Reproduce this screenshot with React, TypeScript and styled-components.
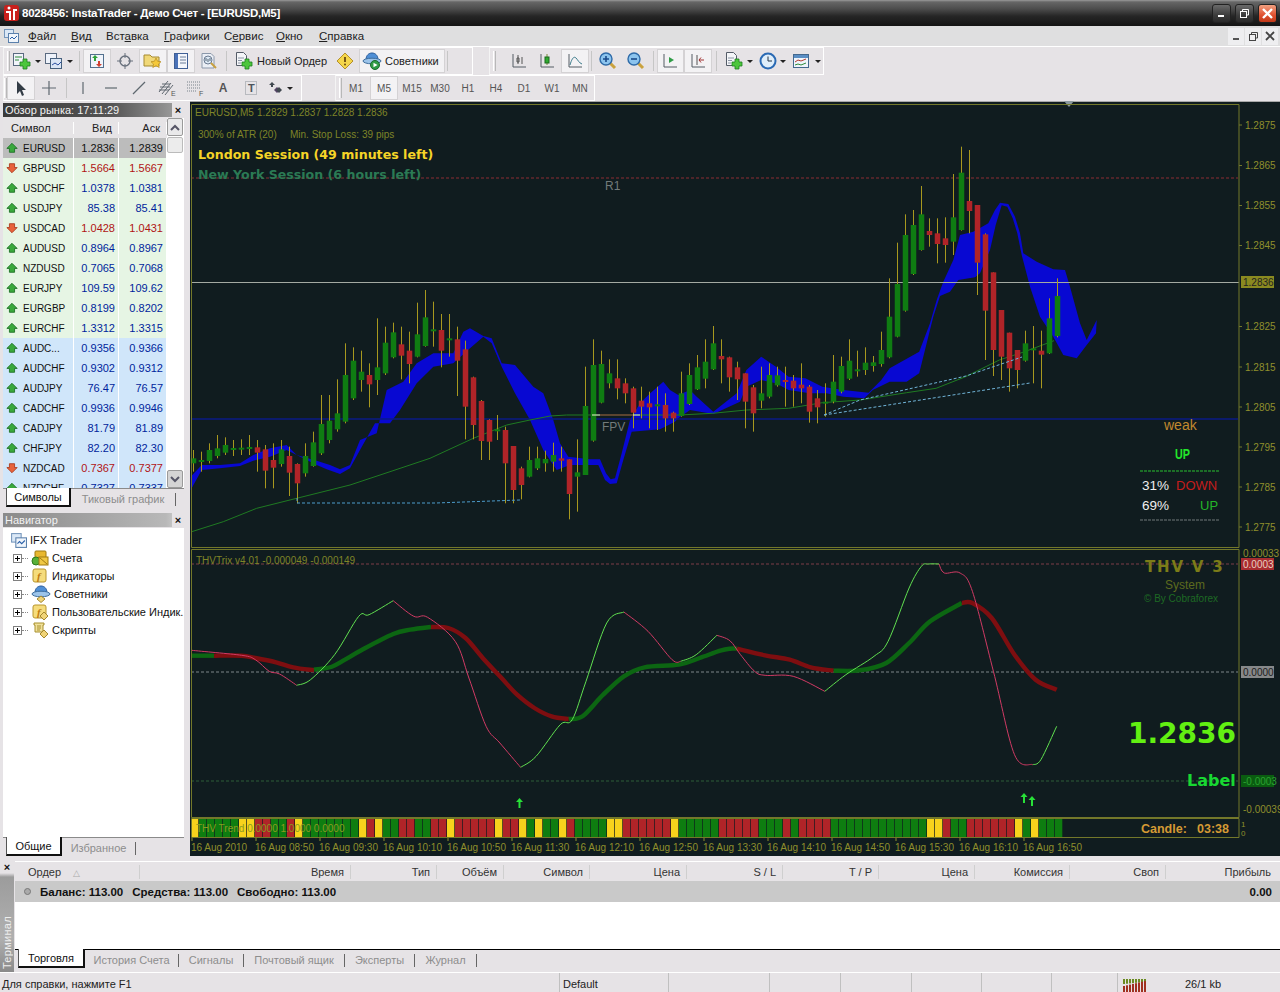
import React from 'react'
import styled, { createGlobalStyle } from 'styled-components'

const GlobalStyle = createGlobalStyle`
  html, body { margin: 0; padding: 0; background: #e6e3e6; }
  body { font-family: "Liberation Sans", Arial, sans-serif; font-size: 11px; color: #111; }
  * { box-sizing: border-box; }
`

const Page = styled.div`
  width: 1280px;
  height: 992px;
  overflow: hidden;
  display: flex;
  flex-direction: column;
  background: #e6e3e6;
`

/* ---------- title + menu ---------- */
const TitleBar = styled.div`
  height: 26px;
  display: flex;
  align-items: center;
  padding: 0 3px 0 3px;
  background: linear-gradient(#9a9a9a 0, #666 2px, #4c4c4c 9px, #262626 16px, #141414 26px);
  color: #fff;
  font-weight: bold;
  font-size: 11.5px;
`
const TitleText = styled.span`
  margin-left: 2px;
  letter-spacing: -0.25px;
`
const TitleButtons = styled.div`
  margin-left: auto;
  display: flex;
  gap: 4px;
`
const WinButton = styled.div<{ $close?: boolean }>`
  width: 19px;
  height: 19px;
  border-radius: 3px;
  display: flex;
  align-items: center;
  justify-content: center;
  border: 1px solid #222;
  background: ${p => p.$close ? 'linear-gradient(#f0a080, #e05030 60%, #c03818)' : 'linear-gradient(#6a6a6a, #3c3c3c 60%, #2a2a2a)'};
`
const MenuBar = styled.div`
  height: 21px;
  display: flex;
  align-items: center;
  background: #dfdfe0;
  border-bottom: 1px solid #fff;
  padding-left: 3px;
`
const MenuIcon = styled.span`
  width: 25px;
  display: flex;
`
const MenuItem = styled.span<{ $w: number }>`
  width: ${p => p.$w}px;
  font-size: 11.5px;
  color: #222;
  u { text-decoration: underline; }
`
const MdiButtons = styled.div`
  margin-left: auto;
  display: flex;
  gap: 1px;
  padding-right: 2px;
`
const MdiButton = styled.div`
  width: 16px;
  height: 17px;
  background: #eeeef0;
  display: flex;
  align-items: center;
  justify-content: center;
`

/* ---------- toolbars ---------- */
const ToolRow = styled.div<{ $h: number }>`
  height: ${p => p.$h}px;
  display: flex;
  padding-left: 3px;
`
const ToolGroup = styled.div<{ $w: number; $ml?: number; $pl?: number }>`
  width: ${p => p.$w}px;
  margin-left: ${p => p.$ml ?? 0}px;
  height: 100%;
  display: flex;
  align-items: center;
  padding-left: ${p => p.$pl ?? 3}px;
  border-top: 1px solid #fff;
  border-bottom: 1px solid #fff;
  border-right: 1px solid #fff;
  border-left: 1px solid #f4f4f4;
`
const Handle = styled.div`
  width: 3px;
  height: 20px;
  border-left: 1px solid #fff;
  border-right: 1px solid #b8b8b8;
`
const Spacer = styled.span<{ $w: number }>`
  width: ${p => p.$w}px;
  flex: none;
`
const ToolButton = styled.div<{ $w?: number; $on?: boolean; $pad?: number }>`
  width: ${p => p.$w ?? 28}px;
  height: 24px;
  display: flex;
  align-items: center;
  justify-content: ${p => p.$pad !== undefined ? 'flex-start' : 'center'};
  gap: 3px;
  padding-left: ${p => p.$pad ?? 0}px;
  font-size: 11px;
  color: #222;
  background: ${p => p.$on ? '#f3f2f4' : 'transparent'};
  box-shadow: ${p => p.$on ? 'inset 0 0 0 1px #d4d2d4' : 'none'};
`
const TfButton = styled(ToolButton)`
  font-size: 10px;
  color: #555;
`
const ToolSep = styled.div<{ $w: number }>`
  width: ${p => p.$w}px;
  height: 20px;
  display: flex;
  justify-content: center;
  &::after { content: ""; width: 1px; background: #c6c6c6; }
`
const Caret = styled.span`
  width: 0;
  height: 0;
  border-left: 3px solid transparent;
  border-right: 3px solid transparent;
  border-top: 3px solid #222;
`
const ToolLetter = styled.span`
  font: bold 12px "Liberation Sans", Arial, sans-serif;
  color: #555;
`

/* ---------- left column ---------- */
const Main = styled.div`
  height: 755px;
  display: flex;
`
const LeftColumn = styled.div`
  width: 190px;
  flex: none;
  display: flex;
  flex-direction: column;
  padding: 2px 6px 0 3px;
`
const DockHead = styled.div<{ $light?: boolean }>`
  height: 14px;
  flex: none;
  display: flex;
  align-items: center;
  justify-content: space-between;
  color: #f2f2f2;
  font-size: 11px;
  padding-left: 2px;
  background: ${p => p.$light
    ? 'linear-gradient(90deg, #8a8a8a, #b8b8b8 90%, #d8d8d8)'
    : 'linear-gradient(90deg, #3a3a3a, #555 60%, #8c8c8c 88%, #a6a6a6)'};
`
const DockTitle = styled.span`
  flex: 1;
  line-height: 13px;
`
const DockClose = styled.span`
  color: #111;
  font-weight: bold;
  font-size: 11px;
  background: #e6e3e6;
  width: 12px;
  text-align: center;
  line-height: 14px;
`
const WatchBody = styled.div`
  height: 370px;
  margin-top: 1px;
  display: flex;
  background: #fff;
  overflow: hidden;
`
const WatchTable = styled.div`
  width: 164px;
  flex: none;
`
const WatchHeader = styled.div`
  height: 20px;
  display: grid;
  grid-template-columns: 71px 45px 48px;
  align-items: center;
  background: #e6e4e6;
  font-size: 11px;
  color: #222;
`
const WatchCell = styled.div<{ $right?: boolean }>`
  padding: ${p => p.$right ? '0 6px 0 0' : '0 0 0 8px'};
  text-align: ${p => p.$right ? 'right' : 'left'};
  border-right: 1px solid #fff;
`
const WatchRow = styled.div<{ $bg: string }>`
  height: 20px;
  display: grid;
  grid-template-columns: 71px 45px 48px;
  align-items: center;
  background: ${p => p.$bg};
`
const SymbolCell = styled.div`
  display: flex;
  align-items: center;
  gap: 5px;
  padding-left: 3px;
  font-size: 10px;
  height: 100%;
  color: #111;
  border-right: 1px solid #fff;
`
const PriceCell = styled.div<{ $c: string }>`
  height: 100%;
  line-height: 20px;
  text-align: right;
  padding-right: 3px;
  font-size: 11px;
  color: ${p => p.$c};
  border-right: 1px solid #fff;
`
const ScrollTrack = styled.div`
  width: 16px;
  display: flex;
  flex-direction: column;
  background: #fff;
`
const ScrollButton = styled.div<{ $dim?: boolean }>`
  height: 18px;
  flex: none;
  display: flex;
  align-items: center;
  justify-content: center;
  background: ${p => p.$dim ? '#d4d4d4' : '#e9e9ea'};
  border: 1px solid #9a9a9a;
  border-radius: 2px;
`
const ScrollThumb = styled.div`
  height: 16px;
  margin-top: 1px;
  flex: none;
  background: #ececec;
  border: 1px solid #bbb;
  border-radius: 2px;
`
const ScrollGap = styled.div`
  flex: 1;
`
const DockTabs = styled.div`
  height: 19px;
  flex: none;
  display: flex;
  align-items: flex-start;
  border-top: 1px solid #8a8a8a;
  font-size: 11px;
  color: #8d8d8d;
  padding-left: 3px;
`
const ActiveTab = styled.div<{ $w: number }>`
  width: ${p => p.$w}px;
  height: 19px;
  margin-top: -1px;
  background: #fff;
  color: #111;
  text-align: center;
  line-height: 18px;
  border-left: 1px solid #555;
  border-right: 2px solid #111;
  border-bottom: 2px solid #111;
`
const IdleTab = styled.div<{ $w: number }>`
  width: ${p => p.$w}px;
  text-align: center;
  border-right: 1px solid #666;
  height: 13px;
  margin-top: 4px;
  line-height: 12px;
`
const NavigatorDock = styled.div`
  margin-top: 6px;
  flex: 1;
  display: flex;
  flex-direction: column;
`
const NavBody = styled.div`
  flex: 1;
  margin-top: 1px;
  background: #fff;
  padding-top: 3px;
  overflow: hidden;
`
const TreeRoot = styled.div`
  height: 18px;
  display: flex;
  align-items: center;
  gap: 3px;
  padding-left: 7px;
  font-size: 11px;
`
const TreeItem = styled.div`
  height: 18px;
  display: flex;
  align-items: center;
  font-size: 11px;
  padding-left: 10px;
  white-space: nowrap;
  gap: 3px;
  color: #111;
`
const Expander = styled.div`
  width: 9px;
  height: 9px;
  flex: none;
  border: 1px solid #808080;
  background: #fff;
  position: relative;
  margin-right: 1px;
  &::before {
    content: "";
    position: absolute;
    left: 1px; right: 1px; top: 3px;
    height: 1px;
    background: #000;
  }
  &::after {
    content: "";
    position: absolute;
    top: 1px; bottom: 1px; left: 3px;
    width: 1px;
    background: #000;
  }
`
const TreeDots = styled.div`
  width: 6px;
  margin-left: -4px;
  border-top: 1px dotted #888;
`

/* ---------- chart ---------- */
const ChartColumn = styled.div`
  flex: 1;
  display: flex;
  flex-direction: column;
  background: #101c1f;
  box-shadow: inset 0 1px 0 #a8a8a8;
`
const PaneSvg = styled.svg<{ $h: number }>`
  display: block;
  width: 1090px;
  height: ${p => p.$h}px;
  flex: none;
`
const AxisText = styled.text`
  font: 10px "Liberation Sans", Arial, sans-serif;
  fill: #8f8f2c;
`
const SmallAxisText = styled(AxisText)`
  font-size: 8px;
`
const LegendText = styled.text`
  font: 10px "Liberation Sans", Arial, sans-serif;
  fill: #7f8428;
`
const SessionText = styled.text<{ $c: string }>`
  font: bold 12.6px "DejaVu Sans", Verdana, sans-serif;
  fill: ${p => p.$c};
`
const PivotText = styled.text`
  font: 12px "Liberation Sans", Arial, sans-serif;
  fill: #737b7b;
`
const StatText = styled.text<{ $c: string; $s?: number; $b?: boolean }>`
  font-family: "Liberation Sans", Arial, sans-serif;
  font-size: ${p => p.$s ?? 13}px;
  font-weight: ${p => p.$b ? 'bold' : 'normal'};
  fill: ${p => p.$c};
`
const BigText = styled.text<{ $c: string; $s: number; $track?: number }>`
  font-family: "DejaVu Sans", Verdana, sans-serif;
  font-weight: bold;
  font-size: ${p => p.$s}px;
  letter-spacing: ${p => p.$track ?? 0}px;
  fill: ${p => p.$c};
`

/* ---------- terminal ---------- */
const Terminal = styled.div`
  height: 116px;
  flex: none;
  display: flex;
  padding-top: 1px;
`
const TerminalStrip = styled.div`
  width: 14px;
  flex: none;
  display: flex;
  flex-direction: column;
  align-items: center;
  padding-top: 5px;
  background: linear-gradient(#e6e3e6 16px, #9c9c9c 20px, #b0b0b0 70%, #8a8a8a);
`
const StripClose = styled.span`
  font-weight: bold;
  font-size: 11px;
  color: #111;
  line-height: 11px;
`
const StripLabel = styled.span`
  margin-top: auto;
  margin-bottom: 3px;
  writing-mode: vertical-rl;
  transform: rotate(180deg);
  color: #eee;
  font-size: 11px;
  letter-spacing: 0.3px;
`
const TerminalBody = styled.div`
  flex: 1;
  display: flex;
  flex-direction: column;
  padding-top: 4px;
  margin-left: 1px;
`
const OrderHeader = styled.div`
  height: 20px;
  flex: none;
  display: grid;
  grid-template-columns: 125px 211px 86px 67px 86px 97px 96px 96px 96px 95px 96px 114px;
  align-items: center;
  font-size: 11px;
  color: #333;
  border-top: 1px solid #fff;
`
const OrderCol = styled.div<{ $left?: boolean; $last?: boolean }>`
  height: 14px;
  line-height: 14px;
  text-align: ${p => p.$left ? 'left' : 'right'};
  padding: ${p => p.$left ? '0 0 0 13px' : p.$last ? '0 9px 0 0' : '0 6px 0 0'};
  border-right: ${p => p.$last ? 'none' : '1px solid #cfcfcf'};
  span { color: #aaa; margin-left: 12px; font-size: 9px; }
`
const SummaryRow = styled.div`
  height: 21px;
  flex: none;
  background: #c9c9c9;
  display: flex;
  align-items: center;
  gap: 9px;
  padding: 0 8px 0 9px;
  font-weight: bold;
  font-size: 11.5px;
  color: #111;
`
const SummaryValue = styled.span`
  margin-left: auto;
`
const SummaryDot = styled.span`
  width: 7px;
  height: 7px;
  border-radius: 50%;
  background: #aaa;
  border: 1px solid #777;
`
const OrderBlank = styled.div`
  flex: 1;
  background: #fff;
`
const TermTabs = styled.div`
  height: 23px;
  flex: none;
  display: flex;
  align-items: flex-start;
  border-top: 1px solid #000;
  padding-left: 3px;
  font-size: 11px;
  color: #8d8d8d;
`
const StatusBar = styled.div`
  height: 20px;
  flex: none;
  display: grid;
  grid-template-columns: 560px 109px 101px 71px 71px 70px 70px 66px 162px;
  align-items: stretch;
  border-top: 1px solid #fff;
  font-size: 11px;
  color: #222;
`
const StatusCell = styled.div`
  padding: 5px 0 0 3px;
  border-right: 1px solid #c0c0c0;
  white-space: nowrap;
  &:first-child { padding-left: 2px; }
  &:last-child { border-right: none; display: flex; gap: 38px; padding-left: 5px; }
`

/* ---------- icons ---------- */
const Plus = ({ x = 8, y = 7 }) => (
  <path transform={`translate(${x} ${y})`} d="M3 0h4v3h3v4H7v3H3V7H0V3h3z" fill="#4cc63c" stroke="#1d7d20" strokeWidth=".8" />
)
const NewChartIcon = () => (
  <svg width="20" height="18" viewBox="0 0 20 18"><rect x="1.5" y="1.5" width="10" height="12" fill="#f2f4fa" stroke="#5a6a80" /><path d="M3 5h7M3 8h4" stroke="#2c8a38" /><Plus x={8} y={7} /></svg>
)
const ProfileIcon = () => (
  <svg width="20" height="18" viewBox="0 0 20 18"><rect x="1.5" y="1.5" width="11" height="10" fill="#eef2fa" stroke="#5a6a80" /><rect x="6.5" y="6.5" width="11" height="10" fill="#dbe6f6" stroke="#46607e" /><path d="M8 13l3-2 3 2 3-3" stroke="#2a4ea0" fill="none" /></svg>
)
const WatchIcon = () => (
  <svg width="18" height="18" viewBox="0 0 18 18"><rect x="2.5" y="2.5" width="13" height="13" fill="#f0f4fb" stroke="#53708e" /><path d="M7 3l3 3H8v3H6V6H4z" fill="#2fa23a" /><path d="M11 15l-3-3h2V9h2v3h2z" fill="#d04030" /></svg>
)
const CrossIcon = () => (
  <svg width="18" height="18" viewBox="0 0 18 18" fill="none" stroke="#68707c"><circle cx="9" cy="9" r="5" strokeWidth="1.4" /><path d="M9 1v5M9 12v5M1 9h5M12 9h5" /></svg>
)
const FolderStarIcon = () => (
  <svg width="20" height="18" viewBox="0 0 20 18"><path d="M1 3h6l2 2h7v9H1z" fill="#f0d878" stroke="#a58a30" /><path d="M13 6l1.6 3.3 3.4.4-2.5 2.3.7 3.5-3.2-1.8-3.2 1.8.7-3.5L8 9.700l3.400-.4z" fill="#f5c93a" stroke="#b48a1e" strokeWidth=".7" /></svg>
)
const TermIcon = () => (
  <svg width="18" height="18" viewBox="0 0 18 18"><rect x="2.500" y="1.500" width="13" height="15" fill="#f3f6fc" stroke="#3f5f96" /><rect x="3" y="2" width="3" height="14" fill="#4a72b8" /><path d="M8 5h6M8 8h6M8 11h6" stroke="#6a7c98" /></svg>
)
const TesterIcon = () => (
  <svg width="20" height="18" viewBox="0 0 20 18" fill="none"><path d="M3 1.500h9l3 3V16H3z" fill="#eaeef5" stroke="#8b98aa" /><circle cx="9" cy="8" r="4" fill="#dce8f4" stroke="#6a7a90" /><path d="M12 11l5 5" stroke="#c8a040" strokeWidth="2" /><path d="M7 9V6M9 10V7M11 9V6" stroke="#567" /></svg>
)
const OrderIcon = () => (
  <svg width="20" height="20" viewBox="0 0 20 20"><path d="M2.500 1.500h7l3 3v10h-10z" fill="#f4f5f8" stroke="#555c68" /><path d="M4 7h6M4 9.500h4M4 12h3" stroke="#8a94a4" /><Plus x={8} y={8} /></svg>
)
const WarnIcon = () => (
  <svg width="18" height="18" viewBox="0 0 18 18"><path d="M9 1l8 8-8 8-8-8z" fill="#f5d64a" stroke="#b5902a" /><path d="M9 5v5" stroke="#6a4a10" strokeWidth="1.800" /><circle cx="9" cy="12.500" r="1" fill="#6a4a10" /></svg>
)
const HatIcon = ({ play = true }) => (
  <svg width="20" height="18" viewBox="0 0 20 18"><path d="M4 8c0-5 3-7 6-7s6 2 6 7z" fill="#4f8fd6" stroke="#2c5e9c" /><ellipse cx="10" cy="9" rx="9" ry="2.800" fill="#9cc4ea" stroke="#3c6c9c" />{play ? <><circle cx="13" cy="13" r="4.500" fill="#2f9c46" stroke="#1a6a2c" /><path d="M11.500 10.800l4 2.200-4 2.200z" fill="#fff" /></> : <path d="M10 11l4 3-4 3.500-4-3.500z" fill="#efd47c" stroke="#a5882e" />}</svg>
)
const AxisIcon = ({ children }: { children?: React.ReactNode }) => (
  <svg width="18" height="18" viewBox="0 0 18 18" fill="none"><path d="M3 2v13h13" stroke="#555c64" />{children}</svg>
)
const ZoomIcon = ({ plus }: { plus?: boolean }) => (
  <svg width="20" height="20" viewBox="0 0 20 20"><path d="M11 11l6 6" stroke="#caa23e" strokeWidth="3" /><circle cx="8" cy="8" r="6" fill="#8cc4ee" stroke="#2e6aa8" strokeWidth="1.400" /><path d={plus ? 'M5 8h6M8 5v6' : 'M5 8h6'} stroke="#1a4a8a" strokeWidth="1.600" /></svg>
)
const ClockIcon = () => (
  <svg width="18" height="18" viewBox="0 0 18 18"><circle cx="9" cy="9" r="7.500" fill="#dfeefa" stroke="#2a6ab4" strokeWidth="2" /><path d="M9 4.500V9h4" stroke="#234" fill="none" /></svg>
)
const TemplateIcon = () => (
  <svg width="20" height="18" viewBox="0 0 20 18"><rect x="1.500" y="2.500" width="15" height="13" fill="#f0f5fb" stroke="#44688e" /><rect x="2" y="3" width="14" height="3" fill="#5a8ec4" /><path d="M3 10l3-2 3 1 5-2" stroke="#b03a30" fill="none" /><path d="M3 13l3-1 3 1 5-2" stroke="#2e8a3c" fill="none" /></svg>
)
const CursorIcon = () => (
  <svg width="16" height="18" viewBox="0 0 16 18"><path d="M4 2v13l3-3 2 5 2-1-2-5h4z" fill="#333c46" /></svg>
)
const GreyLine = ({ d }: { d: string }) => (
  <svg width="18" height="18" viewBox="0 0 18 18" fill="none"><path d={d} stroke="#5f6870" strokeWidth="1.200" /></svg>
)
const ChannelIcon = () => (
  <svg width="20" height="18" viewBox="0 0 20 18" fill="none" stroke="#606870"><path d="M2 13L11 2M5 15L14 4M8 16L16 6M3 8h10M2 11h10M5 5h8" /><text x="14" y="17" fontSize="7" fill="#555" stroke="none" fontFamily="Liberation Sans">E</text></svg>
)
const FibIcon = () => (
  <svg width="20" height="18" viewBox="0 0 20 18" fill="none" stroke="#79828a" strokeDasharray="1 1"><path d="M2 3h13M2 6h13M2 9h13M2 12h10" /><text x="14" y="17" fontSize="7" fill="#555" stroke="none" fontFamily="Liberation Sans">F</text></svg>
)
const LabelIcon = () => (
  <svg width="18" height="18" viewBox="0 0 18 18" fill="none"><rect x="3.500" y="2.500" width="11" height="13" stroke="#8a9098" strokeDasharray="1 1" /><text x="6" y="13" fontSize="11" fill="#4c545c" fontWeight="bold" fontFamily="Liberation Sans">T</text></svg>
)
const ShapesIcon = () => (
  <svg width="16" height="16" viewBox="0 0 16 16"><path d="M3 1l3 3H4v2H2V4H0z" fill="#40484f" transform="translate(1 1)" /><path d="M6 5l3 3-3 3-3-3z" fill="#546" transform="translate(3 2)" /><path d="M11 7l3 3-3 3-3-3z" fill="#40484f" /></svg>
)
const TickArrow = ({ up }: { up: boolean }) => (
  <svg width="12" height="12" viewBox="0 0 14 14">
    {up
      ? <path d="M7 1.500L13 7.500H10V12H4V7.500H1z" fill="#3aa83c" stroke="#1c6f24" />
      : <path d="M7 12.500L1 6.500H4V2H10V6.500H13z" fill="#e8633c" stroke="#a8381c" />}
  </svg>
)
const Logo = () => (
  <svg width="17" height="18" viewBox="0 0 17 18"><rect x="1" y="1" width="15" height="16" rx="3" fill="#c8201c" /><circle cx="6" cy="4" r="1.500" fill="#fff" /><path d="M3 7h5v9H6V9H3zM10 5h4v2h-2v9h-2z" fill="#fff" /></svg>
)
const AppDocIcon = ({ size = 16 }) => (
  <svg width={size} height={size} viewBox="0 0 16 16"><rect x="1.500" y="1.500" width="9" height="8" fill="#dbe8f6" stroke="#7596bc" /><rect x="5.500" y="5.500" width="10" height="9" fill="#f0f5fb" stroke="#5a80ac" /><path d="M7 11l2-2 2 2 3-3" stroke="#2a60a8" fill="none" /></svg>
)
const AccountsIcon = () => (
  <svg width="18" height="16" viewBox="0 0 18 16"><rect x="4" y="1" width="11" height="9" rx="1" fill="#e8b830" stroke="#a07a10" /><circle cx="5" cy="11" r="4" fill="#58b038" stroke="#2c7a1c" /><rect x="8" y="7" width="9" height="8" fill="#f0c844" stroke="#a07a10" /><path d="M9 8l7 6" stroke="#a07a10" /></svg>
)
const IndicatorIcon = ({ gem }: { gem?: boolean }) => (
  <svg width="18" height="16" viewBox="0 0 18 16"><rect x="2" y="1" width="13" height="13" rx="2" fill="#f5dc7c" stroke="#b8962e" /><text x="6" y="12" fontSize="11" fontStyle="italic" fontWeight="bold" fill="#c07a10" fontFamily="Liberation Serif">f</text>{gem && <path d="M13 8l4 4-4 4-4-4z" fill="#f0d478" stroke="#a5882e" />}</svg>
)
const ScriptIcon = () => (
  <svg width="18" height="16" viewBox="0 0 18 16"><path d="M3 1h10v2h-1v7H4V3H3z" fill="#f0e09a" stroke="#a8902e" /><path d="M6 4h4M6 6h4M6 8h3" stroke="#a8902e" /><path d="M13 8l4 4-4 4-4-4z" fill="#f0d478" stroke="#a5882e" /></svg>
)

/* ---------- chart data ---------- */
// body top, body bottom, wick top, wick bottom, all in 3x zoom rows above y=100
type Candle = [number, number, number, number, 'g' | 'r']
const candles: Candle[] = [
  [1075,1090,1050,1115,'g'],[1080,1084,1055,1115,'g'],[1050,1083,1030,1090,'g'],[1045,1068,1005,1075,'g'],[1035,1058,1012,1065,'g'],
  [1044,1047,1020,1068,'g'],[1043,1046,1018,1065,'g'],[1041,1044,1005,1065,'g'],[1042,1058,1020,1115,'r'],[1048,1112,1035,1165,'r'],
  [1080,1103,1030,1165,'r'],[1048,1092,1020,1100,'g'],[1068,1118,1040,1188,'r'],[1092,1150,1090,1210,'r'],[1068,1120,1030,1130,'g'],
  [1027,1098,995,1100,'g'],[972,1060,885,1065,'g'],[962,1020,885,1030,'g'],[940,988,838,995,'g'],[825,965,730,970,'g'],
  [782,895,742,900,'g'],[815,840,752,875,'g'],[825,853,790,922,'r'],[802,840,655,885,'g'],[728,820,680,825,'g'],
  [697,772,668,775,'g'],[733,767,680,838,'r'],[752,792,695,850,'r'],[703,770,608,772,'g'],[652,738,570,740,'g'],
  [688,694,605,740,'g'],[690,752,642,802,'r'],[715,720,642,770,'g'],[718,782,680,888,'r'],[748,920,722,1018,'r'],
  [832,975,830,1018,'r'],[903,1023,900,1080,'r'],[960,1025,958,1080,'r'],[988,994,945,1020,'g'],[990,1090,980,1210,'r'],
  [1038,1170,1038,1210,'r'],[1105,1155,1100,1198,'r'],[1080,1130,1040,1132,'g'],[1075,1105,1040,1110,'g'],[1077,1090,1052,1115,'g'],
  [1065,1085,1028,1115,'g'],[1075,1082,1040,1115,'r'],[1078,1182,1078,1258,'r'],[1117,1130,1018,1235,'g'],[918,1125,800,1125,'g'],
  [795,1022,718,1025,'g'],[792,908,752,910,'g'],[820,850,778,865,'g'],[835,865,778,898,'r'],
  [850,880,835,910,'r'],[865,938,860,985,'r'],[902,920,860,955,'r'],[910,922,875,985,'r'],[913,916,860,990,'g'],
  [915,955,880,995,'r'],[938,955,935,995,'r'],[880,948,815,950,'g'],[825,912,790,915,'g'],[802,868,765,870,'g'],
  [785,836,718,865,'g'],[730,808,678,810,'g'],[768,778,718,850,'r'],[772,832,770,875,'r'],[802,838,785,900,'r'],
  [820,905,820,985,'r'],[862,940,855,995,'r'],[880,902,800,925,'g'],[825,890,790,895,'g'],[826,856,800,860,'g'],
  [840,845,800,920,'r'],[842,865,825,920,'r'],[854,865,790,910,'r'],[860,935,855,968,'r'],[895,922,870,970,'r'],
  [905,908,850,950,'g'],[845,905,765,910,'g'],[798,875,770,880,'g'],[782,836,718,840,'g'],[808,810,752,830,'g'],
  [788,810,742,825,'g'],[787,798,768,815,'g'],[750,792,695,800,'g'],[650,772,535,775,'g'],[552,710,428,712,'g'],
  [405,632,343,635,'g'],[375,522,330,525,'g'],[343,450,258,452,'g'],[393,405,355,440,'r'],[400,432,355,490,'r'],
  [415,435,352,488,'r'],[352,425,222,465,'g'],[218,390,140,392,'g'],[303,333,150,400,'r'],[315,488,315,585,'r'],
  [403,632,400,780,'r'],[517,750,517,828,'r'],[630,770,630,840,'r'],[698,805,698,875,'r'],[750,810,750,865,'r'],
  [730,782,692,785,'g'],[745,747,678,850,'g'],[752,764,692,865,'r'],[655,760,595,762,'g'],[588,708,535,712,'g'],
]
type Pts = number[][]
const zoomA = (p: Pts) => p.map(([x, y]) => [190 + x / 3, 100 + y / 3])
const zoomB = (p: Pts) => p.map(([x, y]) => [620 + x / 2.373, 100 + y / 3])
const zoomC = (p: Pts) => p.map(([x, y]) => [590 + x / 3, 370 + y / 3])
const zoomD = (p: Pts) => p.map(([x, y]) => [930 + x / 3, 190 + y / 3])
const str = (p: Pts) => p.map(([x, y]) => `${x.toFixed(1)},${y.toFixed(1)}`).join(' ')

// catmull-rom through the points so the oscillator lines come out round
const smooth = (p: Pts) => {
  let d = `M${p[0][0].toFixed(1)} ${p[0][1].toFixed(1)}`
  for (let i = 0; i < p.length - 1; i++) {
    const a = p[Math.max(i - 1, 0)], b = p[i], c = p[i + 1], e = p[Math.min(i + 2, p.length - 1)]
    const c1 = [b[0] + (c[0] - a[0]) / 6, b[1] + (c[1] - a[1]) / 6]
    const c2 = [c[0] - (e[0] - b[0]) / 6, c[1] - (e[1] - b[1]) / 6]
    d += `C${c1[0].toFixed(1)} ${c1[1].toFixed(1)} ${c2[0].toFixed(1)} ${c2[1].toFixed(1)} ${c[0].toFixed(1)} ${c[1].toFixed(1)}`
  }
  return d
}

const bandTop = [
  ...zoomA([[2,1130],[35,1095],[90,1095],[150,1090],[190,1065],[240,1045],[290,1035],[320,1065],[380,1082],[420,1095],[450,1108],[480,1095],[510,1020],[560,1000],[590,870],[640,845],[680,790],[730,760],[790,760],[820,695],[840,685],[880,708],[905,715],[935,790],[975,795],[1030,860],[1060,880],[1090,960],[1110,1030],[1135,1070]]),
  ...zoomC([[0,268],[30,268],[48,310],[62,328],[75,325],[95,250],[120,150],[150,100],[175,75],[220,35],[240,60],[265,75],[300,60],[320,80],[370,125],[440,70]]),
  ...zoomB([[300,810],[335,770],[370,800],[400,830],[440,835],[480,860],[530,870],[590,878],[620,840],[640,805],[710,755]]),
  ...zoomD([[0,400],[20,330],[40,275],[70,210],[90,135],[130,125],[175,100],[195,60],[210,38],[235,42],[255,80],[270,130],[280,190],[320,215],[370,238],[405,240],[420,290],[450,400],[470,450],[500,390]]),
]
const bandBottom = [
  ...zoomD([[498,430],[470,465],[440,505],[400,495],[370,440],[330,380],[300,290],[275,195],[262,130],[248,85],[232,50],[215,46],[197,105],[180,180],[150,250],[135,262],[85,270],[60,305],[30,318],[10,380],[-5,440]]),
  ...zoomB([[710,820],[680,845],[640,845],[600,870],[580,895],[530,890],[490,880],[450,880],[400,870],[370,850],[335,840],[300,860]]),
  ...zoomC([[450,95],[370,132],[300,120],[265,145],[255,155],[210,178],[125,185],[100,270],[80,340],[60,342],[45,330],[25,285],[0,285]]),
  ...zoomA([[1140,1095],[1100,1110],[1060,1050],[1020,960],[975,880],[935,800],[905,730],[880,710],[840,745],[790,790],[730,800],[680,850],[630,930],[600,970],[555,970],[510,1050],[480,1105],[450,1122],[410,1108],[380,1095],[320,1065],[290,1050],[240,1070],[190,1082],[150,1098],[90,1105],[35,1110],[2,1170]]),
]
const maLine = [
  ...zoomA([[5,1295],[100,1265],[200,1225],[320,1195],[480,1155],[600,1115],[720,1075],[850,1015],[950,975],[1020,960],[1080,948],[1130,945]]),
  ...zoomB([[140,945],[220,940],[300,930],[400,925],[480,908],[570,900],[680,878],[750,865],[820,830],[900,780],[960,755],[1030,722]]),
]
const priceTicks: [string, number][] = [['1.2875',125],['1.2865',165.5],['1.2855',205.5],['1.2845',245.5],['1.2825',326.5],['1.2815',367],['1.2805',407],['1.2795',447],['1.2785',487],['1.2775',527]]

const osc7 = (p: Pts) => p.map(([x, y]) => [190 + x / 2.904, 548 + y / 3])
const osc8 = (p: Pts) => p.map(([x, y]) => [730 + x / 2.847, 548 + y / 3])
const heavy: [string, Pts][] = [
  ['g', osc7([[5,323],[70,323]])],
  ['r', osc7([[70,323],[150,323],[190,330],[250,343],[300,358],[360,367]])],
  ['g', osc7([[360,365],[410,357],[450,335],[500,305],[590,258],[640,245],[700,237]])],
  ['r', osc7([[700,237],[750,240],[800,270],[850,330],[900,385],[950,440],[1000,480],[1050,505],[1100,513]])],
  ['g', [...osc7([[1100,513],[1140,505],[1200,440],[1260,385],[1320,358],[1420,350],[1480,330],[1540,308]]), ...osc8([[0,302],[20,302]])]],
  ['r', osc8([[20,302],[100,322],[170,335],[230,358],[295,368]])],
  ['g', osc8([[295,368],[370,367],[445,345],[510,285],[570,220],[660,165]])],
  ['r', osc8([[660,165],[690,165],[745,210],[810,320],[870,395],[930,425]])],
]
const signal: [string, Pts][] = [
  ['r', osc7([[5,307],[150,322],[190,335],[230,370],[260,378],[310,412]])],
  ['g', osc7([[310,412],[350,395],[420,320],[490,205],[520,200],[590,158]])],
  ['r', osc7([[590,158],[650,205],[690,208],[770,280],[810,390],[860,535],[900,585],[960,658]])],
  ['g', osc7([[960,658],[1005,625],[1075,530],[1110,515],[1150,400],[1210,225],[1260,192]])],
  ['r', osc7([[1260,192],[1330,250],[1400,335],[1425,340]])],
  ['g', osc7([[1425,340],[1470,320],[1530,262]])],
  ['r', [...osc7([[1530,262],[1568,278]]), ...osc8([[30,320],[70,370],[100,382],[180,385],[270,430]])]],
  ['g', osc8([[270,430],[330,380],[410,325],[450,280],[510,120],[545,55],[565,48],[595,48]])],
  ['r', osc8([[595,48],[610,75],[655,75],[690,130],[750,370],[810,620],[862,650]])],
  ['g', osc8([[862,650],[885,635],[930,535]])],
]
const trend = 'YGGGGGYYRRGGRYGGGGGGGYRYGGRRGGRRYRRRRRYRRYGYGGYRGGGGYYRRRRRRYGGGGGRRRRRGGGRGRRRRGGGGGGGGGGGGYYRGGRRRRRRYGYGGG'
const trendColor: Record<string, string> = { Y: '#f7d21c', G: '#0e7d10', R: '#b02428' }
const timeTicks = ['2010','08:50','09:30','10:10','10:50','11:30','12:10','12:50','13:30','14:10','14:50','15:30','16:10','16:50']

const GreenArrow = ({ x, y }: { x: number; y: number }) => (
  <path transform={`translate(${x} ${y})`} d="M0 -5L-3.500 -1H-1V5H1V-1H3.500Z" fill="#28e038" />
)

const PriceChart = () => (
  <PaneSvg $h={448} viewBox="190 101 1090 448">
    <polygon points={str([...bandTop, ...bandBottom])} fill="#0808d2" />
    <path d="M191 419H1238" stroke="#0a1a86" strokeWidth="1.500" />
    <path d="M191 178H1238" stroke="#8a2c34" strokeDasharray="3 2" />
    <path d="M191 282.500H1239" stroke="#a4aaa2" />
    <polyline points={str(maLine)} fill="none" stroke="#1f7a22" />
    {candles.map((c, i) => {
      const x = Math.round(192.67 + 8 * i)
      return (
        <g key={i}>
          <path d={`M${x + 0.5} ${100 + c[2] / 3}V${100 + c[3] / 3}`} stroke="#a8981e" />
          <rect x={x - 2.25} y={100 + c[0] / 3} width={5.5} height={Math.max((c[1] - c[0]) / 3, 2)} fill={c[4] === 'g' ? '#0f7c12' : '#b02428'} />
        </g>
      )
    })}
    <path d="M297 498V503H436L520 500" fill="none" stroke="#4c9ccc" strokeDasharray="3 2" />
    <path d="M824 415L1030 383M824 415L860 400L966 376L1022 357" fill="none" stroke="#70b4d8" strokeDasharray="3 2" />
    <path d="M592 415H600M633 415H640" stroke="#f0f0d0" />
    <path d="M600 415H633" stroke="#a04040" />
    <path d="M1064 101H1074L1069 107Z" fill="#8c9aa0" />
    <LegendText x={195} y={116}>EURUSD,M5</LegendText>
    <LegendText x={257} y={116}>1.2829 1.2837 1.2828 1.2836</LegendText>
    <LegendText x={198} y={138}>300% of ATR (20)</LegendText>
    <LegendText x={290} y={138}>Min. Stop Loss:</LegendText>
    <LegendText x={362} y={138}>39 pips</LegendText>
    <SessionText x={198} y={159} $c="#f6d427">London Session (49 minutes left)</SessionText>
    <SessionText x={198} y={179} $c="#2b7a54">New York Session (6 hours left)</SessionText>
    <PivotText x={605} y={190}>R1</PivotText>
    <PivotText x={602} y={431}>FPV</PivotText>
    <StatText x={1164} y={430} $c="#c2892e" $s={14}>weak</StatText>
    <StatText x={1175} y={459} $c="#22e62a" $s={15} $b textLength={15} lengthAdjust="spacingAndGlyphs">UP</StatText>
    <path d="M1140 471H1219" stroke="#28c030" strokeDasharray="3 1" />
    <StatText x={1142} y={490} $c="#eee" $s={13.500}>31%</StatText>
    <StatText x={1176} y={490} $c="#c41c1c">DOWN</StatText>
    <StatText x={1142} y={510} $c="#eee" $s={13.500}>69%</StatText>
    <StatText x={1200} y={510} $c="#24b428">UP</StatText>
    <path d="M1140 520H1219" stroke="#70787a" strokeDasharray="3 1" />
    <path d="M191.500 104.500H1239V547.500H191.500Z" fill="none" stroke="#73782a" />
    {priceTicks.map(([t, y]) => (
      <g key={t}>
        <path d={`M1239 ${y}h3`} stroke="#73782a" />
        <AxisText x={1245} y={y + 3.500}>{t}</AxisText>
      </g>
    ))}
    <rect x={1241} y={276} width={33} height={12} fill="#8a8a20" />
    <AxisText x={1243} y={286} style={{ fill: '#222' }}>1.2836</AxisText>
  </PaneSvg>
)

const OscChart = () => (
  <PaneSvg $h={269} viewBox="190 549 1090 269">
    <path d="M191 564H1238" stroke="#7c3c48" strokeDasharray="3 2" />
    <path d="M191 672H1238" stroke="#7d8589" strokeDasharray="3 2" />
    <path d="M191 781H1238" stroke="#2c5c38" strokeDasharray="3 2" />
    {heavy.map(([c, pts], i) => (
      <path key={i} d={smooth(pts)} fill="none" strokeWidth="4.400" stroke={c === 'g' ? '#0c6612' : '#7e0e10'} />
    ))}
    {signal.map(([c, pts], i) => (
      <path key={i} d={smooth(pts)} fill="none" strokeWidth="1" stroke={c === 'g' ? '#60e050' : '#d03a64'} />
    ))}
    <GreenArrow x={519.500} y={803} />
    <GreenArrow x={1024} y={798} />
    <GreenArrow x={1032} y={801} />
    <LegendText x={196} y={564}>THVTrix v4.01 -0.000049 -0.000149</LegendText>
    <BigText x={1145} y={572} $c="#7c7c18" $s={15} $track={1.8}>THV V 3</BigText>
    <StatText x={1165} y={589} $c="#5c6a1e" $s={12}>System</StatText>
    <StatText x={1144} y={602} $c="#1e6a24" $s={10}>© By Cobraforex</StatText>
    <BigText x={1128} y={743} $c="#62f012" $s={28}>1.2836</BigText>
    <BigText x={1187} y={786} $c="#18d832" $s={16}>Label</BigText>
    <path d="M191.500 549.500H1239V817.500H191.500Z" fill="none" stroke="#73782a" />
    <AxisText x={1243} y={557}>0.00033</AxisText>
    <rect x={1241} y={558} width={33} height={12} fill="#a82c30" />
    <AxisText x={1243} y={568} style={{ fill: '#e8d0c0' }}>0.0003</AxisText>
    <rect x={1241} y={666} width={33} height={12} fill="#86888a" />
    <AxisText x={1243} y={676} style={{ fill: '#1c1c1c' }}>0.0000</AxisText>
    <rect x={1241} y={775} width={33} height={12} fill="#0a5c10" />
    <AxisText x={1243} y={785} style={{ fill: '#2aa030' }}>-0.0003</AxisText>
    <AxisText x={1243} y={813}>-0.00039</AxisText>
  </PaneSvg>
)

const TrendBar = () => (
  <PaneSvg $h={20} viewBox="190 818 1090 20">
    {trend.split('').map((c, i) => (
      <rect key={i} x={191 + i * 8} y={819} width={7.300} height={18} fill={trendColor[c]} />
    ))}
    <LegendText x={196} y={832} style={{ fill: '#8a9a20' }}>THV Trend 0.0000 1.0000 0.0000</LegendText>
    <StatText x={1141} y={833} $c="#d49a34" $s={12.500} $b>Candle:</StatText>
    <StatText x={1197} y={833} $c="#d49a34" $s={12.500} $b>03:38</StatText>
    <path d="M191.500 818.500H1239V837.500H191.500Z" fill="none" stroke="#73782a" />
    <SmallAxisText x={1241} y={827}>1</SmallAxisText>
    <SmallAxisText x={1241} y={836}>0</SmallAxisText>
  </PaneSvg>
)

const TimeAxis = () => (
  <PaneSvg $h={18} viewBox="190 838 1090 18">
    {timeTicks.map((t, i) => (
      <g key={t}>
        <path d={`M${192 + i * 64} 838v3`} stroke="#8f8f2c" />
        <AxisText x={191 + i * 64} y={851}>16 Aug {t}</AxisText>
      </g>
    ))}
  </PaneSvg>
)

/* ---------- table data ---------- */
const UP = '#001f9c'
const DOWN = '#b01414'
const watch: [string, string, string, boolean, string][] = [
  ['EURUSD','1.2836','1.2839',true,'#bcbcbc'],
  ['GBPUSD','1.5664','1.5667',false,'#e6f5e4'],
  ['USDCHF','1.0378','1.0381',true,'#e6f5e4'],
  ['USDJPY','85.38','85.41',true,'#e6f5e4'],
  ['USDCAD','1.0428','1.0431',false,'#e6f5e4'],
  ['AUDUSD','0.8964','0.8967',true,'#e6f5e4'],
  ['NZDUSD','0.7065','0.7068',true,'#e6f5e4'],
  ['EURJPY','109.59','109.62',true,'#e6f5e4'],
  ['EURGBP','0.8199','0.8202',true,'#e6f5e4'],
  ['EURCHF','1.3312','1.3315',true,'#e6f5e4'],
  ['AUDC...','0.9356','0.9366',true,'#d0e6fa'],
  ['AUDCHF','0.9302','0.9312',true,'#d0e6fa'],
  ['AUDJPY','76.47','76.57',true,'#d0e6fa'],
  ['CADCHF','0.9936','0.9946',true,'#d0e6fa'],
  ['CADJPY','81.79','81.89',true,'#d0e6fa'],
  ['CHFJPY','82.20','82.30',true,'#d0e6fa'],
  ['NZDCAD','0.7367','0.7377',false,'#d0e6fa'],
  ['NZDCHF','0.7327','0.7337',true,'#d0e6fa'],
]
// before the underlined letter, the letter, after it, column width
const menu: [string, string, string, number][] = [
  ['','Ф','айл',43],['','В','ид',35],['Вст','а','вка',58],['','Г','рафики',60],['С','е','рвис',52],['','О','кно',43],['','С','правка',60],
]
const termCols = ['Время','Тип','Объём','Символ','Цена','S / L','T / P','Цена','Комиссия','Своп']

export default function App() {
  return (
    <Page>
      <GlobalStyle />
      <TitleBar>
        <Logo />
        <TitleText>8028456: InstaTrader - Демо Счет - [EURUSD,M5]</TitleText>
        <TitleButtons>
          <WinButton><svg width="9" height="9"><rect x="1" y="6" width="6" height="2" fill="#fff" /></svg></WinButton>
          <WinButton><svg width="11" height="11" fill="none" stroke="#fff"><path d="M3.500 3V1.500H9.500V7H8" /><rect x="1.500" y="3.500" width="6" height="6" /></svg></WinButton>
          <WinButton $close><svg width="13" height="13" stroke="#fff" strokeWidth="2.400"><path d="M2 2l9 9M11 2l-9 9" /></svg></WinButton>
        </TitleButtons>
      </TitleBar>
      <MenuBar>
        <MenuIcon><AppDocIcon /></MenuIcon>
        {menu.map(([a, u, b, w], i) => (
          <MenuItem key={i} $w={w}>{a}<u>{u}</u>{b}</MenuItem>
        ))}
        <MdiButtons>
          <MdiButton><svg width="9" height="9"><rect x="1" y="6" width="6" height="2" fill="#555" /></svg></MdiButton>
          <MdiButton><svg width="11" height="11" fill="none" stroke="#444"><path d="M3.500 3V1.500H9.500V7H8" /><rect x="1.500" y="3.500" width="6" height="6" /></svg></MdiButton>
          <MdiButton><svg width="10" height="10" stroke="#444" strokeWidth="1.800"><path d="M1 1l8 8M9 1l-8 8" /></svg></MdiButton>
        </MdiButtons>
      </MenuBar>

      <ToolRow $h={28}>
        <ToolGroup $w={470}>
          <Handle />
          <ToolButton $w={32}><NewChartIcon /><Caret /></ToolButton>
          <ToolButton $w={33}><ProfileIcon /><Caret /></ToolButton>
          <ToolSep $w={8} />
          <ToolButton $on><WatchIcon /></ToolButton>
          <ToolButton><CrossIcon /></ToolButton>
          <ToolButton $on><FolderStarIcon /></ToolButton>
          <ToolButton $on><TermIcon /></ToolButton>
          <ToolButton><TesterIcon /></ToolButton>
          <ToolSep $w={6} />
          <ToolButton $w={104} $pad={5}><OrderIcon />Новый Ордер</ToolButton>
          <ToolButton $w={23}><WarnIcon /></ToolButton>
          <Spacer $w={3} />
          <ToolButton $w={86} $pad={3} $on><HatIcon />Советники</ToolButton>
          <ToolSep $w={4} />
        </ToolGroup>
        <ToolGroup $w={335} $ml={16}>
          <Handle />
          <Spacer $w={9} />
          <ToolButton><AxisIcon><path d="M8 3v9M7 6h2v4H7zM12 5v7" stroke="#555" /></AxisIcon></ToolButton>
          <ToolButton><AxisIcon><path d="M9 2v11" stroke="#7a8a3c" /><rect x="7" y="5" width="4" height="6" fill="#2faa30" stroke="#1a6a1a" /></AxisIcon></ToolButton>
          <ToolButton $on><AxisIcon><path d="M4 13c2-7 4-9 6-7s3 5 6 6" stroke="#3a7a8a" /></AxisIcon></ToolButton>
          <ToolSep $w={5} />
          <ToolButton><ZoomIcon plus /></ToolButton>
          <ToolButton><ZoomIcon /></ToolButton>
          <ToolSep $w={7} />
          <ToolButton $on><AxisIcon><path d="M8 5l5 3-5 3z" fill="#2f9c46" /></AxisIcon></ToolButton>
          <ToolButton $on><AxisIcon><path d="M8 3v10" stroke="#555" /><path d="M15 8h-5M12 5.500L10 8l2 2.500" stroke="#a03030" fill="none" /></AxisIcon></ToolButton>
          <ToolSep $w={8} />
          <ToolButton $w={36}><OrderIcon /><Caret /></ToolButton>
          <ToolButton $w={33}><ClockIcon /><Caret /></ToolButton>
          <ToolButton $w={34}><TemplateIcon /><Caret /></ToolButton>
        </ToolGroup>
      </ToolRow>

      <ToolRow $h={26}>
        <ToolGroup $w={299} $pl={0}>
          <Handle />
          <ToolButton $on><CursorIcon /></ToolButton>
          <ToolButton><GreyLine d="M9 2v14M2 9h14" /></ToolButton>
          <ToolSep $w={6} />
          <ToolButton><GreyLine d="M9 3v12" /></ToolButton>
          <ToolButton><GreyLine d="M3 9h12" /></ToolButton>
          <ToolButton><GreyLine d="M3 15L15 3" /></ToolButton>
          <ToolButton><ChannelIcon /></ToolButton>
          <ToolButton><FibIcon /></ToolButton>
          <ToolButton><ToolLetter>A</ToolLetter></ToolButton>
          <ToolButton><LabelIcon /></ToolButton>
          <ToolButton $w={30}><ShapesIcon /><Caret /></ToolButton>
        </ToolGroup>
        <ToolGroup $w={260} $ml={33}>
          <Handle />
          {['M1','M5','M15','M30','H1','H4','D1','W1','MN'].map(t => (
            <TfButton key={t} $on={t === 'M5'}>{t}</TfButton>
          ))}
        </ToolGroup>
      </ToolRow>

      <Main>
        <LeftColumn>
          <DockHead>
            <DockTitle>Обзор рынка: 17:11:29</DockTitle>
            <DockClose>×</DockClose>
          </DockHead>
          <WatchBody>
            <WatchTable>
              <WatchHeader>
                <WatchCell>Символ</WatchCell>
                <WatchCell $right>Вид</WatchCell>
                <WatchCell $right>Аск</WatchCell>
              </WatchHeader>
              {watch.map(([s, b, a, up, bg], i) => {
                const c = i === 0 ? '#111' : up ? UP : DOWN
                return (
                  <WatchRow key={s} $bg={bg}>
                    <SymbolCell><TickArrow up={up} />{s}</SymbolCell>
                    <PriceCell $c={c}>{b}</PriceCell>
                    <PriceCell $c={c}>{a}</PriceCell>
                  </WatchRow>
                )
              })}
            </WatchTable>
            <ScrollTrack>
              <ScrollButton><svg width="10" height="7" fill="none" stroke="#556" strokeWidth="2"><path d="M1 6l4-4 4 4" /></svg></ScrollButton>
              <ScrollThumb />
              <ScrollGap />
              <ScrollButton $dim><svg width="10" height="7" fill="none" stroke="#556" strokeWidth="2"><path d="M1 1l4 4 4-4" /></svg></ScrollButton>
            </ScrollTrack>
          </WatchBody>
          <DockTabs>
            <ActiveTab $w={65}>Символы</ActiveTab>
            <IdleTab $w={105}>Тиковый график</IdleTab>
          </DockTabs>
          <NavigatorDock>
            <DockHead $light>
              <DockTitle>Навигатор</DockTitle>
              <DockClose>×</DockClose>
            </DockHead>
            <NavBody>
              <TreeRoot><AppDocIcon size={17} />IFX Trader</TreeRoot>
              <TreeItem><Expander /><TreeDots /><AccountsIcon />Счета</TreeItem>
              <TreeItem><Expander /><TreeDots /><IndicatorIcon />Индикаторы</TreeItem>
              <TreeItem><Expander /><TreeDots /><HatIcon play={false} />Советники</TreeItem>
              <TreeItem><Expander /><TreeDots /><IndicatorIcon gem />Пользовательские Индик.</TreeItem>
              <TreeItem><Expander /><TreeDots /><ScriptIcon />Скрипты</TreeItem>
            </NavBody>
            <DockTabs>
              <ActiveTab $w={56}>Общие</ActiveTab>
              <IdleTab $w={74}>Избранное</IdleTab>
            </DockTabs>
          </NavigatorDock>
        </LeftColumn>
        <ChartColumn>
          <PriceChart />
          <OscChart />
          <TrendBar />
          <TimeAxis />
        </ChartColumn>
      </Main>

      <Terminal>
        <TerminalStrip>
          <StripClose>×</StripClose>
          <StripLabel>Терминал</StripLabel>
        </TerminalStrip>
        <TerminalBody>
          <OrderHeader>
            <OrderCol $left>Ордер<span>△</span></OrderCol>
            {termCols.map((c, i) => <OrderCol key={i}>{c}</OrderCol>)}
            <OrderCol $last>Прибыль</OrderCol>
          </OrderHeader>
          <SummaryRow>
            <SummaryDot />
            <span>Баланс: 113.00</span>
            <span>Средства: 113.00</span>
            <span>Свободно: 113.00</span>
            <SummaryValue>0.00</SummaryValue>
          </SummaryRow>
          <OrderBlank />
          <TermTabs>
            <ActiveTab $w={67}>Торговля</ActiveTab>
            <IdleTab $w={94}>История Счета</IdleTab>
            <IdleTab $w={65}>Сигналы</IdleTab>
            <IdleTab $w={101}>Почтовый ящик</IdleTab>
            <IdleTab $w={70}>Эксперты</IdleTab>
            <IdleTab $w={62}>Журнал</IdleTab>
          </TermTabs>
        </TerminalBody>
      </Terminal>

      <StatusBar>
        <StatusCell>Для справки, нажмите F1</StatusCell>
        <StatusCell>Default</StatusCell>
        <StatusCell />
        <StatusCell />
        <StatusCell />
        <StatusCell />
        <StatusCell />
        <StatusCell />
        <StatusCell>
          <svg width="24" height="14" viewBox="0 0 24 14">
            {Array.from({ length: 8 }, (_, i) => (
              <g key={i}>
                <rect x={i * 3} y={1} width={2} height={5 - i * 0.3} fill="#6a8a20" />
                <rect x={i * 3} y={8 - i * 0.7} width={2} height={6 + i * 0.7} fill="#a03020" />
              </g>
            ))}
          </svg>
          26/1 kb
        </StatusCell>
      </StatusBar>
    </Page>
  )
}
